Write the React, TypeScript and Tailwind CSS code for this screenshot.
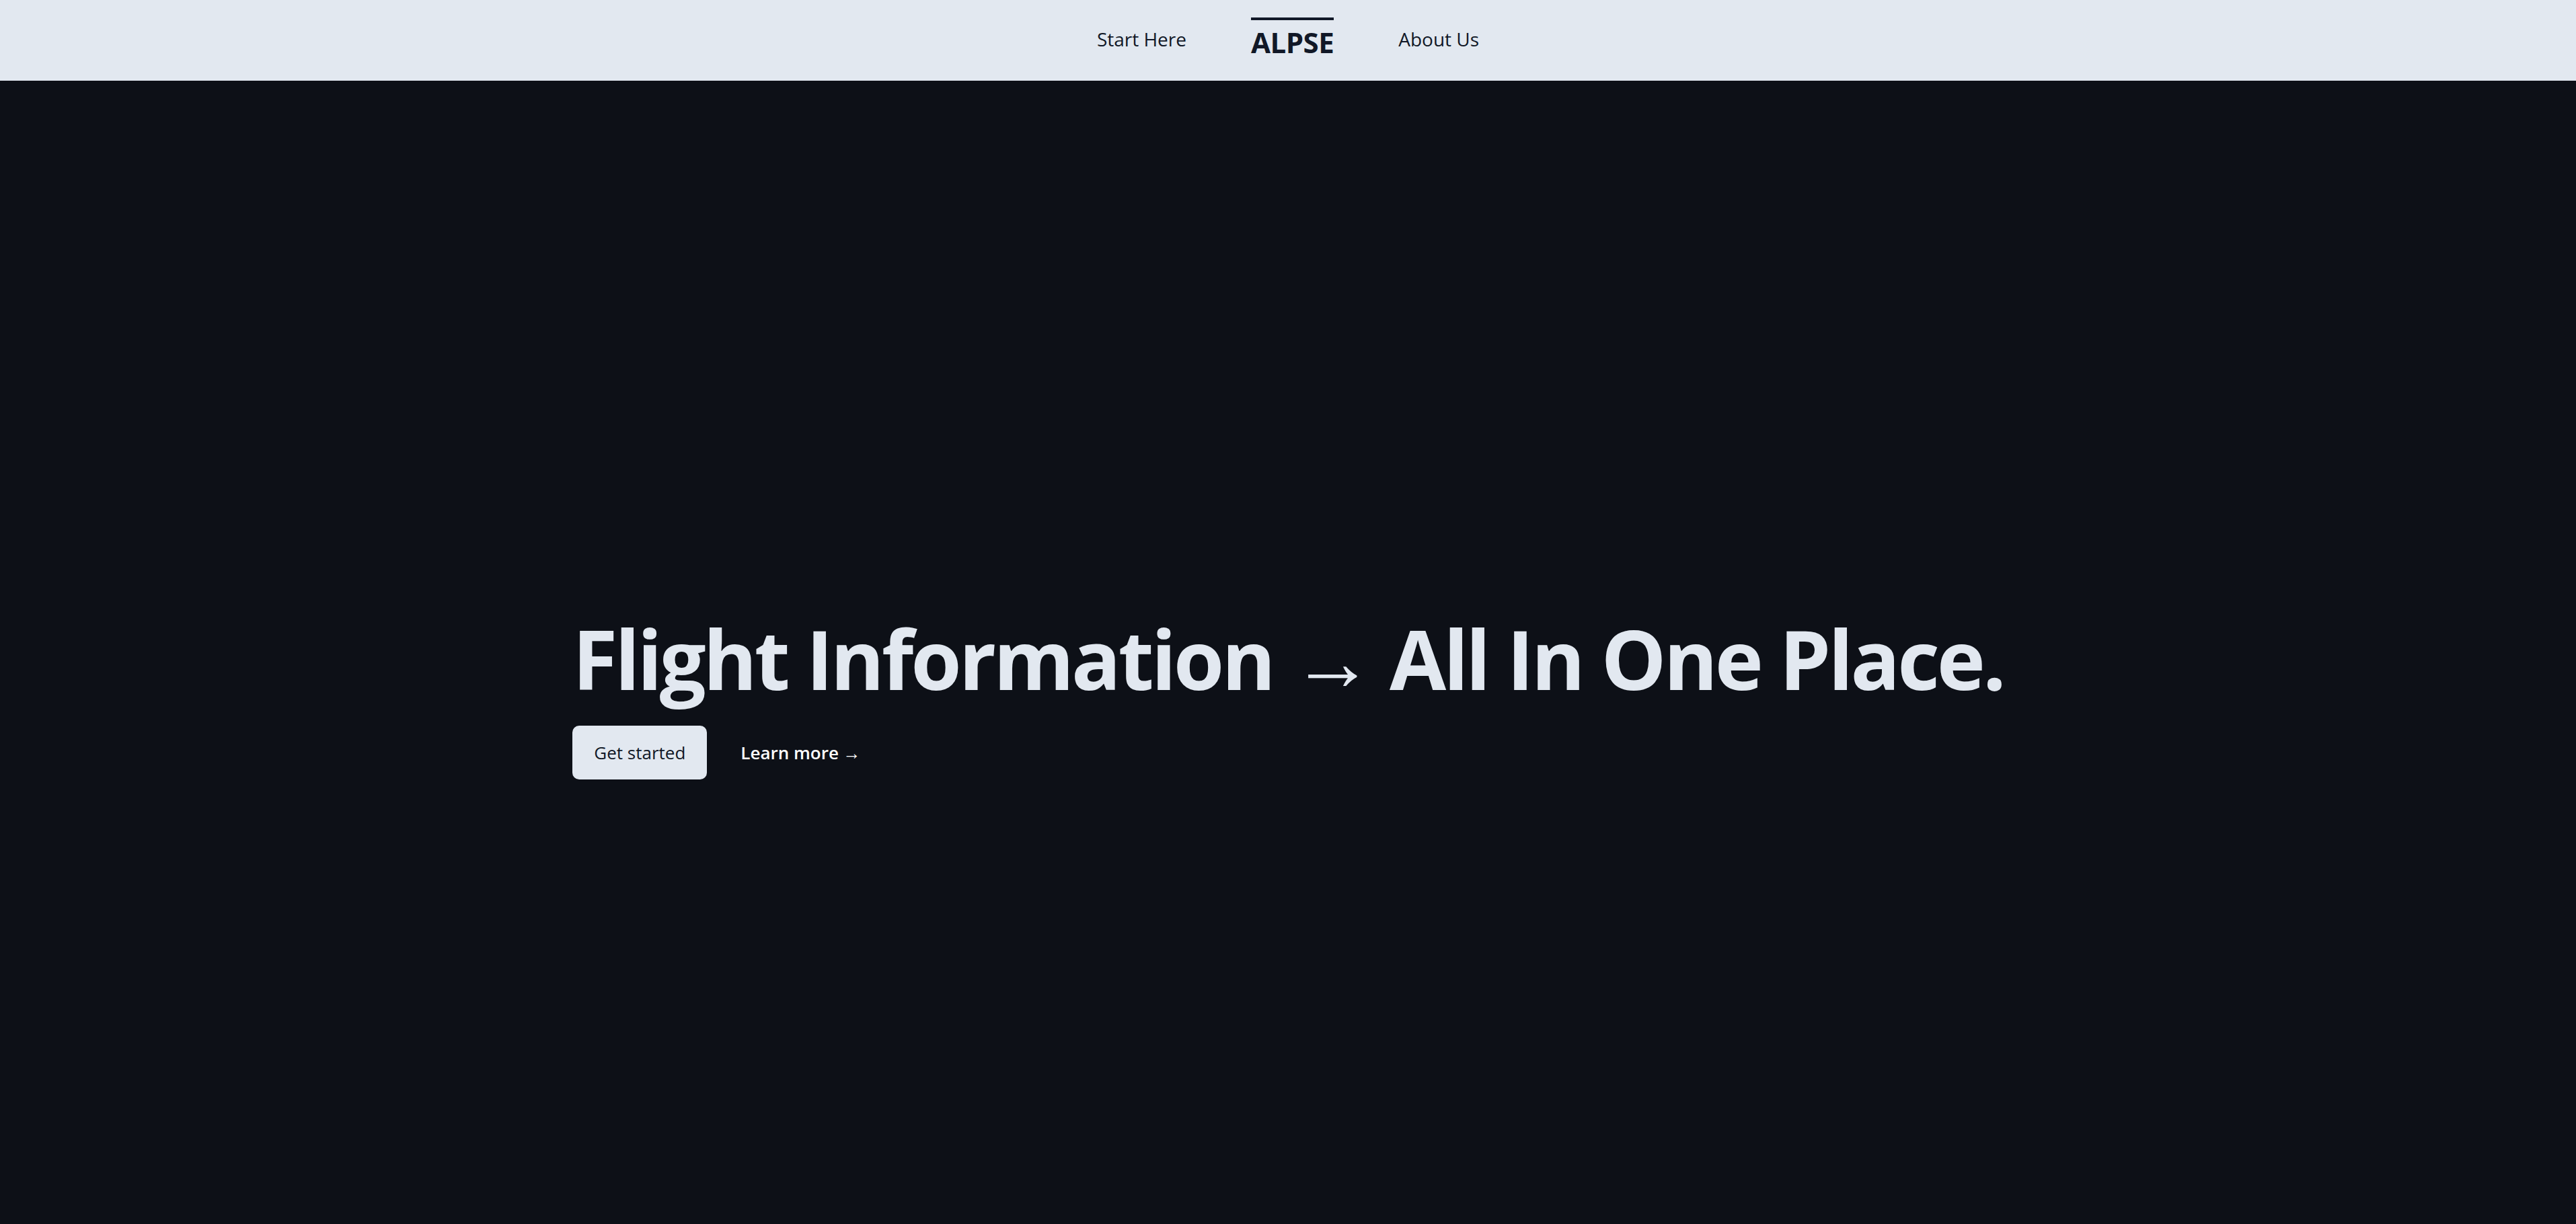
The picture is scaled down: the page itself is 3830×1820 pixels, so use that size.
import React from 'react';

const App: React.FC = () => {
  return (
    <div className="min-h-screen bg-[#0d1017] font-['Open_Sans','Noto_Sans',sans-serif]">
      {/* Top nav */}
      <header className="h-[120px] bg-[#e2e8f0] flex items-center justify-center">
        <nav className="flex items-center gap-[96px] text-[#111827]">
          <a href="#" className="text-[28px] leading-none -mt-[4px]">Start Here</a>
          <a href="#" className="border-t-4 border-[#111827] pt-[12px] mb-[10px] text-[42px] font-bold leading-none tracking-[-0.5px]">
            ALPSE
          </a>
          <a href="#" className="text-[28px] leading-none -mt-[4px]">About Us</a>
        </nav>
      </header>

      {/* Hero */}
      <section className="flex justify-center pt-[798px] pb-[400px]">
        <div className="flex flex-col items-start">
          <h1 className="text-[122px] font-bold leading-none tracking-[-4px] text-[#e2e8f0]">
            Flight Information → All In One Place.
          </h1>
          <div className="mt-[39px] flex items-center gap-[50px]">
            <button className="h-[80px] rounded-[10px] bg-[#e2e8f0] px-[32px] text-[26px] text-[#111827]">
              Get started
            </button>
            <a href="#" className="text-[26px] font-semibold text-white">
              Learn more →
            </a>
          </div>
        </div>
      </section>
    </div>
  );
};

export default App;
